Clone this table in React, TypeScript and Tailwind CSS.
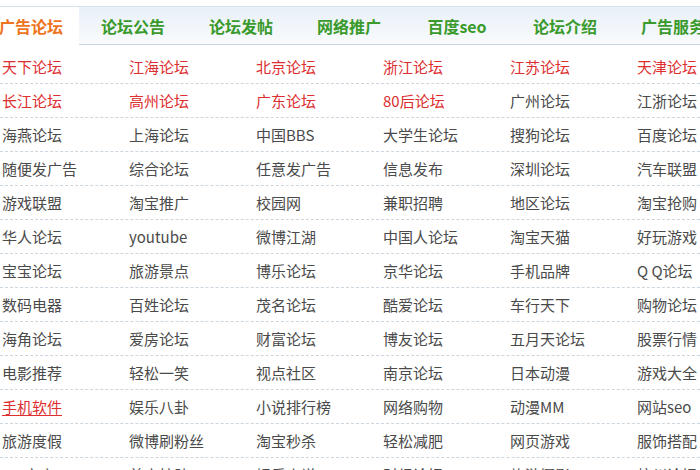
import React from "react";

type Link = { t: string; c?: "red" | "u" };

const tabs = ["论坛公告", "论坛发帖", "网络推广", "百度seo", "论坛介绍", "广告服务"];

const rows: Link[][] = [
  [
    { t: "天下论坛", c: "red" },
    { t: "江海论坛", c: "red" },
    { t: "北京论坛", c: "red" },
    { t: "浙江论坛", c: "red" },
    { t: "江苏论坛", c: "red" },
    { t: "天津论坛", c: "red" },
  ],
  [
    { t: "长江论坛", c: "red" },
    { t: "高州论坛", c: "red" },
    { t: "广东论坛", c: "red" },
    { t: "80后论坛", c: "red" },
    { t: "广州论坛" },
    { t: "江浙论坛" },
  ],
  [{ t: "海燕论坛" }, { t: "上海论坛" }, { t: "中国BBS" }, { t: "大学生论坛" }, { t: "搜狗论坛" }, { t: "百度论坛" }],
  [{ t: "随便发广告" }, { t: "综合论坛" }, { t: "任意发广告" }, { t: "信息发布" }, { t: "深圳论坛" }, { t: "汽车联盟" }],
  [{ t: "游戏联盟" }, { t: "淘宝推广" }, { t: "校园网" }, { t: "兼职招聘" }, { t: "地区论坛" }, { t: "淘宝抢购" }],
  [{ t: "华人论坛" }, { t: "youtube" }, { t: "微博江湖" }, { t: "中国人论坛" }, { t: "淘宝天猫" }, { t: "好玩游戏" }],
  [{ t: "宝宝论坛" }, { t: "旅游景点" }, { t: "博乐论坛" }, { t: "京华论坛" }, { t: "手机品牌" }, { t: "Q Q论坛" }],
  [{ t: "数码电器" }, { t: "百姓论坛" }, { t: "茂名论坛" }, { t: "酷爱论坛" }, { t: "车行天下" }, { t: "购物论坛" }],
  [{ t: "海角论坛" }, { t: "爱房论坛" }, { t: "财富论坛" }, { t: "博友论坛" }, { t: "五月天论坛" }, { t: "股票行情" }],
  [{ t: "电影推荐" }, { t: "轻松一笑" }, { t: "视点社区" }, { t: "南京论坛" }, { t: "日本动漫" }, { t: "游戏大全" }],
  [{ t: "手机软件", c: "u" }, { t: "娱乐八卦" }, { t: "小说排行榜" }, { t: "网络购物" }, { t: "动漫MM" }, { t: "网站seo" }],
  [{ t: "旅游度假" }, { t: "微博刷粉丝" }, { t: "淘宝秒杀" }, { t: "轻松减肥" }, { t: "网页游戏" }, { t: "服饰搭配" }],
  [{ t: "QQ商店" }, { t: "美容护肤" }, { t: "娱乐小说" }, { t: "财经论坛" }, { t: "旅游摄影" }, { t: "杭州论坛" }],
];

const colorOf = (c?: Link["c"]) => {
  if (c === "red") return "text-[#dd2e30]";
  if (c === "u") return "text-[#dd2e30] underline decoration-[#dd2e30] underline-offset-2";
  return "text-[#4a4a4a]";
};

export default function App() {
  return (
    <div className="w-[700px] h-[470px] overflow-hidden bg-white font-['Noto_Sans_CJK_SC','Noto_Sans',sans-serif]">
      {/* tab bar */}
      <div className="pt-[6px]">
        <div className="flex h-[39px] -ml-[18px] border-t border-[#d6e2ee]">
          <div className="w-[99px] shrink-0 flex items-center justify-center bg-white border-r border-[#c9d8e6] text-[16px] font-bold text-[#ee7422]">
            广告论坛
          </div>
          <div className="flex-1 flex items-center -ml-[2px] bg-gradient-to-b from-[#e8f0f8] to-[#f9fbfd] border-b border-[#c9d8e6]">
            {tabs.map((t) => (
              <div key={t} className="w-[108px] shrink-0 text-center text-[16px] font-bold text-[#3a9a2c] whitespace-nowrap">
                {t}
              </div>
            ))}
          </div>
        </div>
      </div>
      {/* link grid */}
      <div className="mt-[5px]">
        {rows.map((r, i) => (
          <div key={i} className="grid grid-cols-[repeat(6,127px)] h-[34px] items-center border-b border-dashed border-[#ccd6df] pl-[2px]">
            {r.map((l) => (
              <span key={l.t} className={`text-[15px] leading-none whitespace-nowrap ${colorOf(l.c)}`}>
                {l.t}
              </span>
            ))}
          </div>
        ))}
      </div>
    </div>
  );
}
